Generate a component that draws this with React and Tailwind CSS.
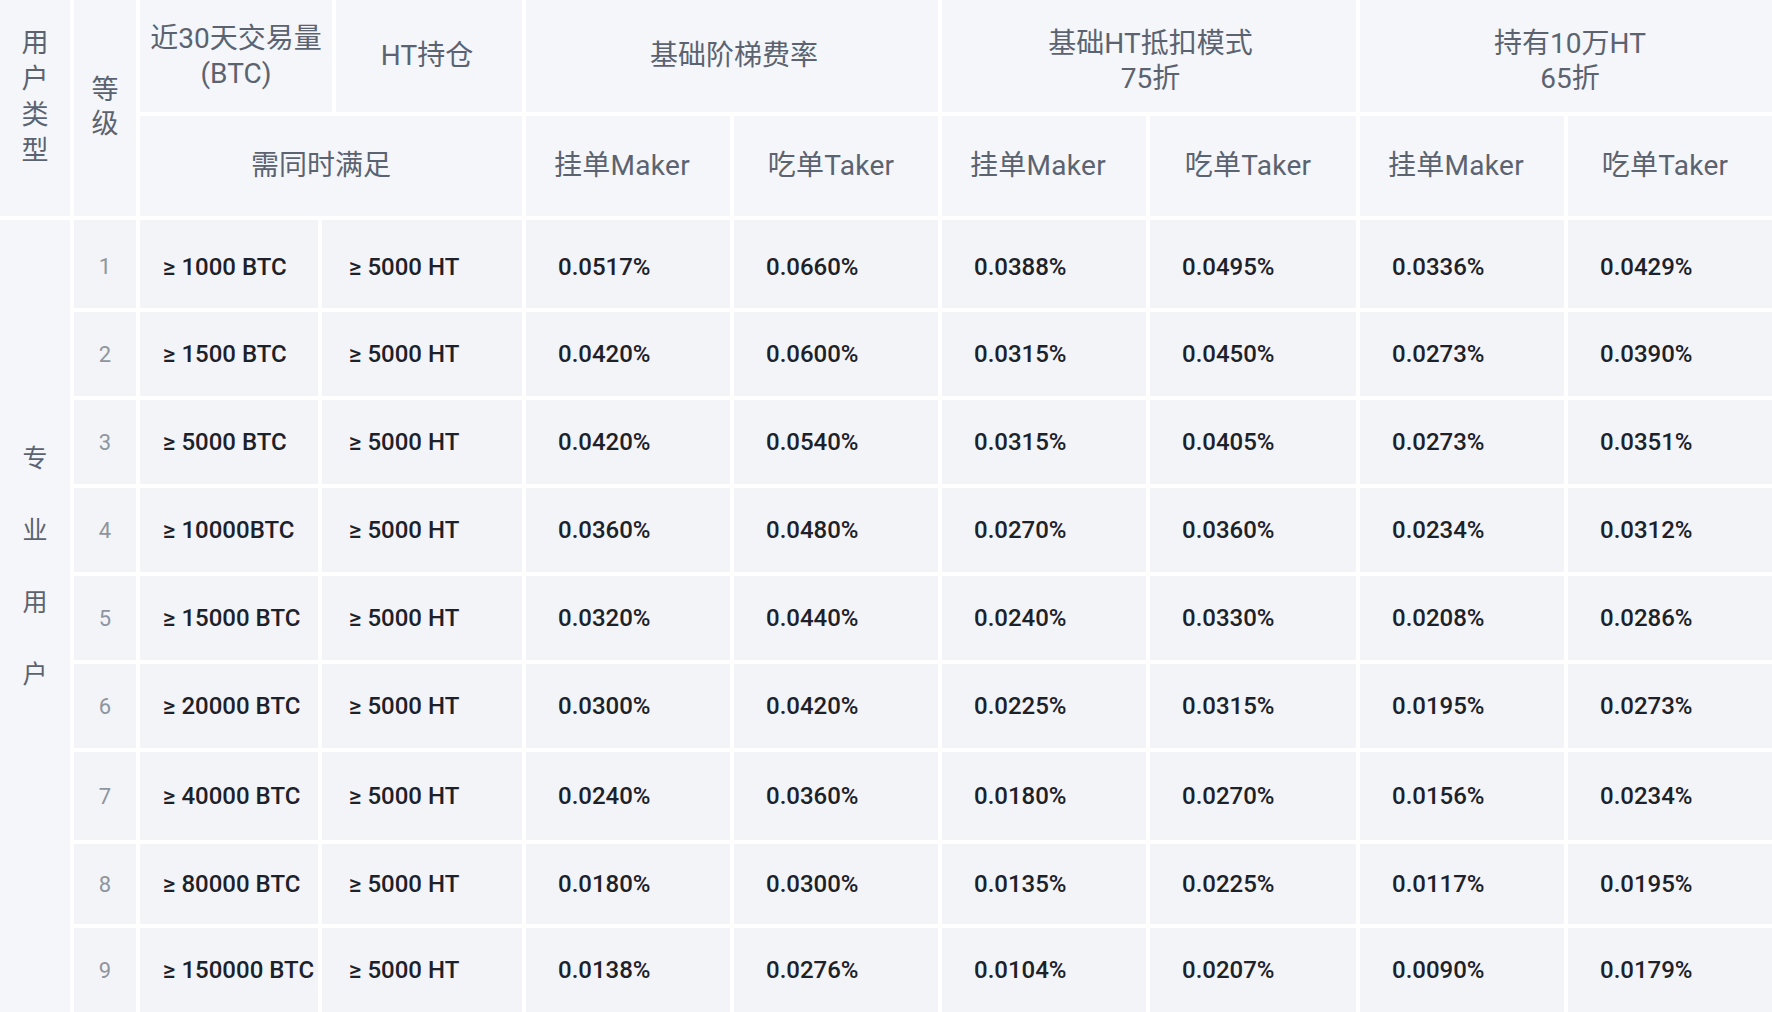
import React from "react";

const rows = [
  { lv: 1, vol: "≥ 1000 BTC", h: "pt-[5px]", v: ["0.0517%", "0.0660%", "0.0388%", "0.0495%", "0.0336%", "0.0429%"] },
  { lv: 2, vol: "≥ 1500 BTC", h: "", v: ["0.0420%", "0.0600%", "0.0315%", "0.0450%", "0.0273%", "0.0390%"] },
  { lv: 3, vol: "≥ 5000 BTC", h: "", v: ["0.0420%", "0.0540%", "0.0315%", "0.0405%", "0.0273%", "0.0351%"] },
  { lv: 4, vol: "≥ 10000BTC", h: "", v: ["0.0360%", "0.0480%", "0.0270%", "0.0360%", "0.0234%", "0.0312%"] },
  { lv: 5, vol: "≥ 15000 BTC", h: "", v: ["0.0320%", "0.0440%", "0.0240%", "0.0330%", "0.0208%", "0.0286%"] },
  { lv: 6, vol: "≥ 20000 BTC", h: "", v: ["0.0300%", "0.0420%", "0.0225%", "0.0315%", "0.0195%", "0.0273%"] },
  { lv: 7, vol: "≥ 40000 BTC", h: "", v: ["0.0240%", "0.0360%", "0.0180%", "0.0270%", "0.0156%", "0.0234%"] },
  { lv: 8, vol: "≥ 80000 BTC", h: "", v: ["0.0180%", "0.0300%", "0.0135%", "0.0225%", "0.0117%", "0.0195%"] },
  { lv: 9, vol: "≥ 150000 BTC", h: "", v: ["0.0138%", "0.0276%", "0.0104%", "0.0207%", "0.0090%", "0.0179%"] },
];

const head = "bg-[#f4f6f9] text-[#5c6370] text-[28px] flex items-center justify-center text-center";
const cell = "bg-[#f2f4f8] flex items-center text-[24px] font-medium text-[#1d2129] whitespace-nowrap";

export default function App() {
  return (
    <div className="w-[1772px] h-[1012px] overflow-hidden bg-white font-[Roboto,'Noto_Sans_CJK_SC',sans-serif]">
      <div className="grid grid-cols-[70px_62px_178px_200px_204px_204px_204px_206px_204px_204px] grid-rows-[112px_100px_88px_84px_84px_84px_84px_84px_88px_80px_84px] gap-1">
        {/* header row 1 */}
        <div className="row-span-2 bg-[#f4f6f9] text-[#5c6370] text-[27px] leading-[36px] flex flex-col items-center pt-[25px]">
          <span>用</span>
          <span>户</span>
          <span>类</span>
          <span>型</span>
        </div>
        <div className="row-span-2 bg-[#f4f6f9] text-[#5c6370] text-[27px] leading-[34px] flex flex-col items-center justify-center pb-[3px]">
          <span>等</span>
          <span>级</span>
        </div>
        <div className="col-span-2 flex gap-1">
          <div className={`w-[192px] leading-[35px] ${head}`}>
            <span>
              近30天交易量
              <br />
              (BTC)
            </span>
          </div>
          <div className={`flex-1 pr-[4px] ${head}`}>HT持仓</div>
        </div>
        <div className={`col-span-2 pl-[4px] ${head}`}>基础阶梯费率</div>
        <div className={`col-span-2 leading-[35px] pt-[9px] pl-[3px] ${head}`}>
          <span>
            基础HT抵扣模式
            <br />
            75折
          </span>
        </div>
        <div className={`col-span-2 leading-[35px] pt-[9px] pl-[8px] ${head}`}>
          <span>
            持有10万HT
            <br />
            65折
          </span>
        </div>

        {/* header row 2 */}
        <div className={`col-span-2 pr-[20px] ${head}`}>需同时满足</div>
        <div className={`pr-[12px] tracking-[0.3px] ${head}`}>挂单Maker</div>
        <div className={`pr-[10px] tracking-[0.3px] ${head}`}>吃单Taker</div>
        <div className={`pr-[12px] tracking-[0.3px] ${head}`}>挂单Maker</div>
        <div className={`pr-[10px] tracking-[0.3px] ${head}`}>吃单Taker</div>
        <div className={`pr-[12px] tracking-[0.3px] ${head}`}>挂单Maker</div>
        <div className={`pr-[10px] tracking-[0.3px] ${head}`}>吃单Taker</div>

        {/* body */}
        <div className="row-span-9 bg-[#f4f6f9] text-[#5c6370] text-[25px] leading-[72px] flex flex-col items-center pt-[203px]">
          <span>专</span>
          <span>业</span>
          <span>用</span>
          <span>户</span>
        </div>
        {rows.map((r) => (
          <React.Fragment key={r.lv}>
            <div className={`bg-[#f2f4f8] flex items-center justify-center text-[22px] text-[#8f959e] ${r.h}`}>{r.lv}</div>
            <div className={`${cell} pl-[23px] ${r.h}`}>{r.vol}</div>
            <div className={`${cell} pl-[27px] ${r.h}`}>≥ 5000 HT</div>
            {r.v.map((x, i) => (
              <div key={i} className={`${cell} pl-[32px] ${r.h}`}>
                {x}
              </div>
            ))}
          </React.Fragment>
        ))}
      </div>
    </div>
  );
}
